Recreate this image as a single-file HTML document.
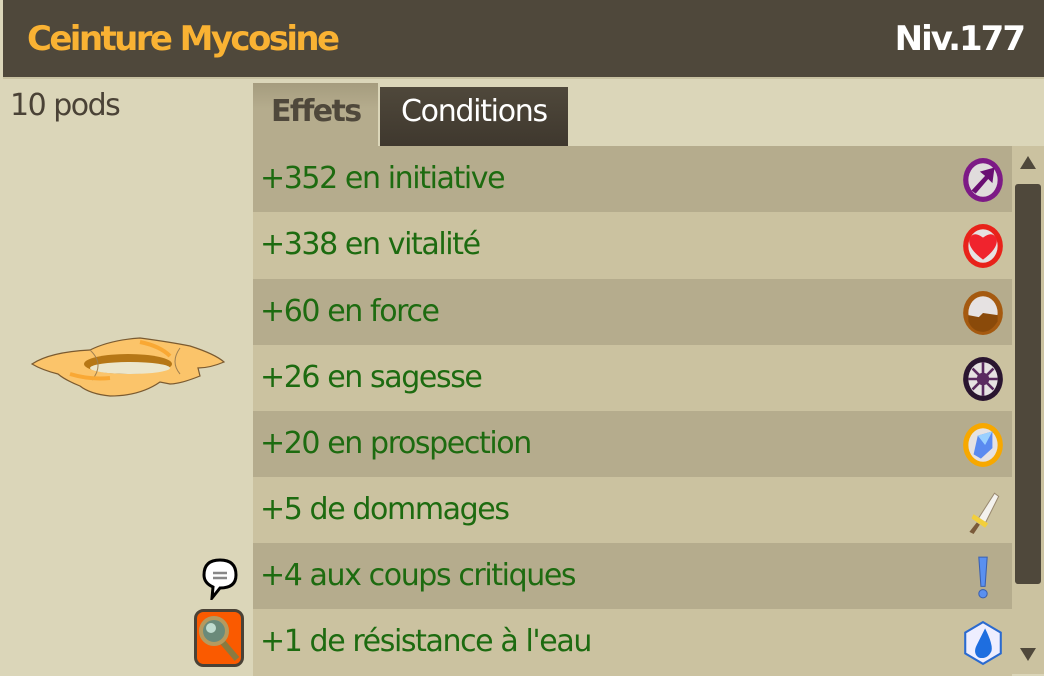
<!DOCTYPE html>
<html><head><meta charset="utf-8"><style>
*{margin:0;padding:0;box-sizing:border-box}
body{width:1044px;height:674px;overflow:hidden;background:#dbd6b9;font-family:"DejaVu Sans","Liberation Sans",sans-serif;position:relative}
.hdr{position:absolute;left:3px;top:0;width:1041px;height:79px;background:#4f483b;border-bottom:2px solid #c9c2a2}
.t{position:absolute;left:24px;top:19px;font:bold 34px "DejaVu Sans",sans-serif;color:#f9b233;letter-spacing:-2.6px}
.n{position:absolute;right:20px;top:19px;font:bold 34px "DejaVu Sans",sans-serif;color:#fff;letter-spacing:-2px}
.pods{position:absolute;left:10px;top:88px;font-size:30px;color:#4a4236;letter-spacing:-1.5px}
.tab1{position:absolute;left:253px;top:83px;width:125px;height:64px;background:linear-gradient(#a59c7e,#b5ac8d 40%);font:bold 30px "DejaVu Sans",sans-serif;color:#4f483b;padding:11px 0 0 18px;letter-spacing:-1.6px}
.tab2{position:absolute;left:380px;top:87px;width:188px;height:59px;background:linear-gradient(#4f483b,#3f382e);color:#fff;font-size:30px;padding:7px 0 0 21px;letter-spacing:-1.3px}
.row{position:absolute;left:253px;width:759px;height:67px;font-size:30px;color:#1d6b10;padding:15px 0 0 7px;letter-spacing:-1.4px}
.d{background:#b5ac8d}.l{background:#cbc2a0}
.ic{position:absolute;right:8px;top:11px;width:42px;height:46px}
.sb{position:absolute;left:1012px;top:146px;width:32px;height:528px;background:#cbc2a0}
.th{position:absolute;left:1015px;top:184px;width:26px;height:400px;background:#4f483b;border-radius:3px}
</style></head><body>
<div class="hdr"><div class="t">Ceinture Mycosine</div><div class="n">Niv.177</div></div>
<div class="pods">10 pods</div>
<svg style="position:absolute;left:30px;top:334px" width="196" height="68" viewBox="0 0 196 68">
<path d="M2 30 Q20 18 60 16 Q80 6 110 4 Q140 8 160 12 Q185 20 194 28 Q180 34 168 34 L170 42 Q150 50 140 50 L130 48 Q110 62 80 62 Q60 60 50 52 Q35 46 28 40 Q12 36 2 30Z" fill="#fbc46a" stroke="#7a5a30" stroke-width="1.2"/>
<ellipse cx="98" cy="30" rx="44" ry="10" fill="#b67716"/>
<ellipse cx="100" cy="34" rx="40" ry="6" fill="#ebe6cc"/>
<path d="M60 16 Q75 30 62 46 M150 14 Q140 28 150 40" stroke="#a08050" stroke-width="1" fill="none"/>
<path d="M110 8 Q130 12 140 22 M40 40 Q60 46 80 44" stroke="#f9a834" stroke-width="4" fill="none"/>
</svg>
<div class="tab1">Effets</div>
<div class="tab2">Conditions</div>
<div class="row d" style="top:146px">+352 en initiative<svg class="ic" viewBox="0 0 40 44"><ellipse cx="20" cy="22" rx="19" ry="21" fill="#7d1a86"/><ellipse cx="20" cy="22" rx="14" ry="16" fill="#e0dcdc"/><path d="M9 32 L22 18 L17 14 L31 10 L29 25 L25 21 L13 35Z" fill="#6a0f73"/></svg></div>
<div class="row l" style="top:212px">+338 en vitalité<svg class="ic" viewBox="0 0 40 44"><ellipse cx="20" cy="22" rx="19" ry="21" fill="#e8221a"/><ellipse cx="20" cy="22" rx="14" ry="16" fill="#e6e2e2"/><path d="M20 35 Q5 24 7 15 Q11 7 20 14 Q29 7 33 15 Q35 24 20 35Z" fill="#f0232d"/></svg></div>
<div class="row d" style="top:279px">+60 en force<svg class="ic" viewBox="0 0 40 44"><ellipse cx="20" cy="22" rx="19" ry="21" fill="#a55a10"/><ellipse cx="20" cy="22" rx="14" ry="16" fill="#e6e2e2"/><path d="M6 24 L16 26 L20 22 L34 24 L34 30 Q28 40 20 40 Q10 40 6 30Z" fill="#8a4a0a"/></svg></div>
<div class="row l" style="top:345px">+26 en sagesse<svg class="ic" viewBox="0 0 40 44"><ellipse cx="20" cy="22" rx="19" ry="21" fill="#2a1530"/><ellipse cx="20" cy="22" rx="14" ry="16" fill="#e6e2e2"/><path d="M20 6V38M6 22H34M10 12L30 32M30 12L10 32" stroke="#5a2a60" stroke-width="2.5"/><circle cx="20" cy="22" r="6" fill="#5a2a60"/></svg></div>
<div class="row d" style="top:411px">+20 en prospection<svg class="ic" viewBox="0 0 40 44"><ellipse cx="20" cy="22" rx="19" ry="21" fill="#f7a800"/><ellipse cx="20" cy="22" rx="14" ry="16" fill="#e6e2e2"/><path d="M11 31 L15 13 L29 9 L29 25 L18 35Z" fill="#5a8af0"/><path d="M15 13 L29 9 L22 22Z" fill="#9ad0ff"/></svg></div>
<div class="row l" style="top:477px">+5 de dommages<svg class="ic" viewBox="0 0 40 44"><path d="M15 30 L31 5 L35 8 L22 34Z" fill="#f4f2ee" stroke="#9a8a70"/><path d="M11 25 L25 34 L22 38 L9 29Z" fill="#f2cf3c"/><path d="M14 33 L7 42 L11 44 L17 35Z" fill="#7a5a3a"/></svg></div>
<div class="row d" style="top:543px">+4 aux coups critiques<svg class="ic" viewBox="0 0 40 44"><path d="M16 3 H24 L22 31 H18Z" fill="#5a90f0" stroke="#3a60b0"/><circle cx="20" cy="38" r="4" fill="#5a90f0" stroke="#3a60b0"/></svg></div>
<div class="row l" style="top:609px">+1 de résistance à l'eau<svg class="ic" viewBox="0 0 40 44"><path d="M20 2 L37 12 V32 L20 42 L3 32 V12Z" fill="#eef" stroke="#2a6ad0" stroke-width="2"/><path d="M22 8 Q30 24 28 30 Q24 38 16 36 Q10 32 14 24Z" fill="#1e6ee0"/></svg></div>
<div class="sb"><div style="position:absolute;left:8px;top:10px;border:8px solid transparent;border-bottom:13px solid #4f483b;border-top:0"></div><div style="position:absolute;left:8px;top:502px;border:8px solid transparent;border-top:13px solid #4f483b;border-bottom:0"></div></div>
<div class="th"></div>
<svg style="position:absolute;left:202px;top:558px" width="36" height="42" viewBox="0 0 36 42"><path d="M18 2 Q34 2 34 17 Q34 30 18 30 L10 40 L11 29 Q2 25 2 17 Q2 2 18 2Z" fill="#fff" stroke="#000" stroke-width="3"/><path d="M11 15H25M11 20H25" stroke="#888" stroke-width="2.5"/></svg>
<svg style="position:absolute;left:194px;top:609px" width="50" height="58" viewBox="0 0 50 58"><rect x="1.5" y="1.5" width="47" height="55" rx="8" fill="#fa5a00" stroke="#4a4236" stroke-width="3"/><path d="M26 30 L43 50" stroke="#8a7a40" stroke-width="6"/><circle cx="20" cy="22" r="13" fill="#6a8a7a" stroke="#b49a60" stroke-width="4"/><circle cx="17" cy="19" r="5" fill="#c0dcd0"/></svg>
</body></html>
